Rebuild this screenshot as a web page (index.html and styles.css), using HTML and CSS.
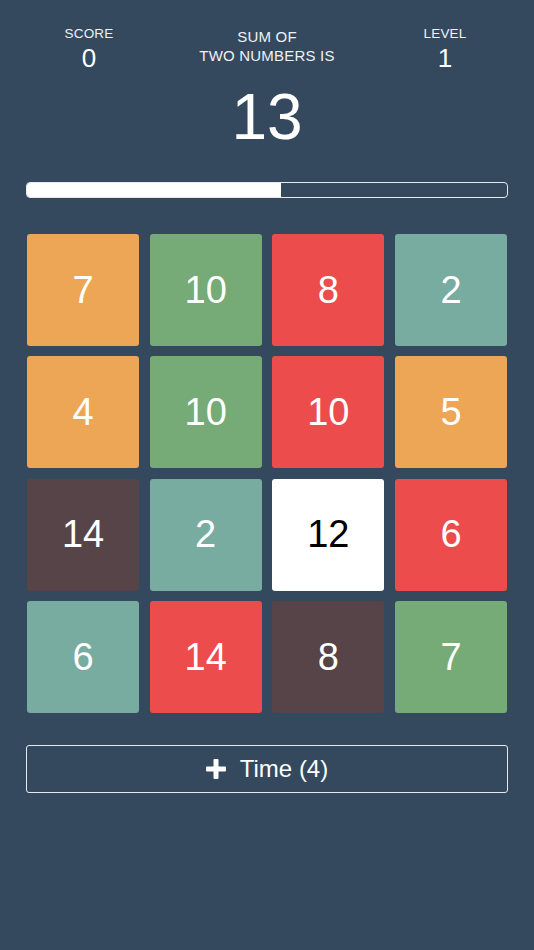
FILE: index.html
```html
<!DOCTYPE html>
<html>
<head>
<meta charset="utf-8">
<link rel="stylesheet" href="styles.css">
</head>
<body>
<div class="app">
  <div class="stats">
    <div class="stat">
      <div class="label">SCORE</div>
      <div class="value">0</div>
    </div>
    <div class="stat">
      <div class="label sum">SUM OF<br>TWO NUMBERS IS</div>
    </div>
    <div class="stat">
      <div class="label">LEVEL</div>
      <div class="value">1</div>
    </div>
  </div>
  <div class="target">13</div>
  <div class="progress"><div class="fill" style="width:53%"></div></div>
  <div class="grid">
    <div class="tile orange">7</div>
    <div class="tile green">10</div>
    <div class="tile red">8</div>
    <div class="tile teal">2</div>
    <div class="tile orange">4</div>
    <div class="tile green">10</div>
    <div class="tile red">10</div>
    <div class="tile orange">5</div>
    <div class="tile dark">14</div>
    <div class="tile teal">2</div>
    <div class="tile white">12</div>
    <div class="tile red">6</div>
    <div class="tile teal">6</div>
    <div class="tile red">14</div>
    <div class="tile dark">8</div>
    <div class="tile green">7</div>
  </div>
  <div class="button">
    <svg class="plus" width="20" height="20" viewBox="0 0 20 20"><rect x="7.5" y="0" width="5" height="20" rx="1" fill="#fff"/><rect x="0" y="7.5" width="20" height="5" rx="1" fill="#fff"/></svg>
    <span>Time (4)</span>
  </div>
</div>
</body>
</html>
```
FILE: styles.css
```css
html, body {
  margin: 0;
  padding: 0;
  background: #34495e;
}
body {
  font-family: "Liberation Sans", Arial, sans-serif;
  color: #fff;
}
.app {
  width: 534px;
  min-height: 950px;
  box-sizing: border-box;
  padding: 26px 26px 0 26px;
  display: flex;
  flex-direction: column;
}
.stats {
  display: grid;
  grid-template-columns: 1fr 1fr 1fr;
  margin: 0 -26px;
}
.stat {
  display: flex;
  flex-direction: column;
  align-items: center;
}
.label {
  font-size: 13.5px;
  line-height: 16px;
  letter-spacing: 0.2px;
  color: #eef1f4;
  text-align: center;
}
.label.sum {
  font-size: 15px;
  line-height: 19px;
  padding-top: 1px;
}
.value {
  font-size: 26px;
  line-height: 30px;
  margin-top: 1px;
}
.target {
  text-align: center;
  font-size: 64px;
  line-height: 74px;
  margin-top: 7px;
}
.progress {
  margin-top: 28px;
  height: 14px;
  border: 1px solid #e6eaee;
  border-radius: 4px;
  overflow: hidden;
}
.fill {
  height: 100%;
  background: #fff;
}
.grid {
  margin-top: 36px;
  margin-left: 1px;
  margin-right: 1px;
  display: grid;
  grid-template-columns: repeat(4, 1fr);
  column-gap: 10.6px;
  row-gap: 10.4px;
}
.tile {
  height: 112px;
  border-radius: 3px;
  display: flex;
  align-items: center;
  justify-content: center;
  font-size: 38px;
  color: #fff;
}
.orange { background: #eda655; }
.green { background: #76aa76; }
.red { background: #ec4c4c; }
.teal { background: #78aca0; }
.dark { background: #574449; }
.white { background: #fff; color: #000; }
.button {
  margin-top: 32px;
  height: 46px;
  border: 1px solid #e6eaee;
  border-radius: 3px;
  display: flex;
  align-items: center;
  justify-content: center;
  gap: 14px;
  font-size: 24px;
}
.plus {
  display: block;
}
```
